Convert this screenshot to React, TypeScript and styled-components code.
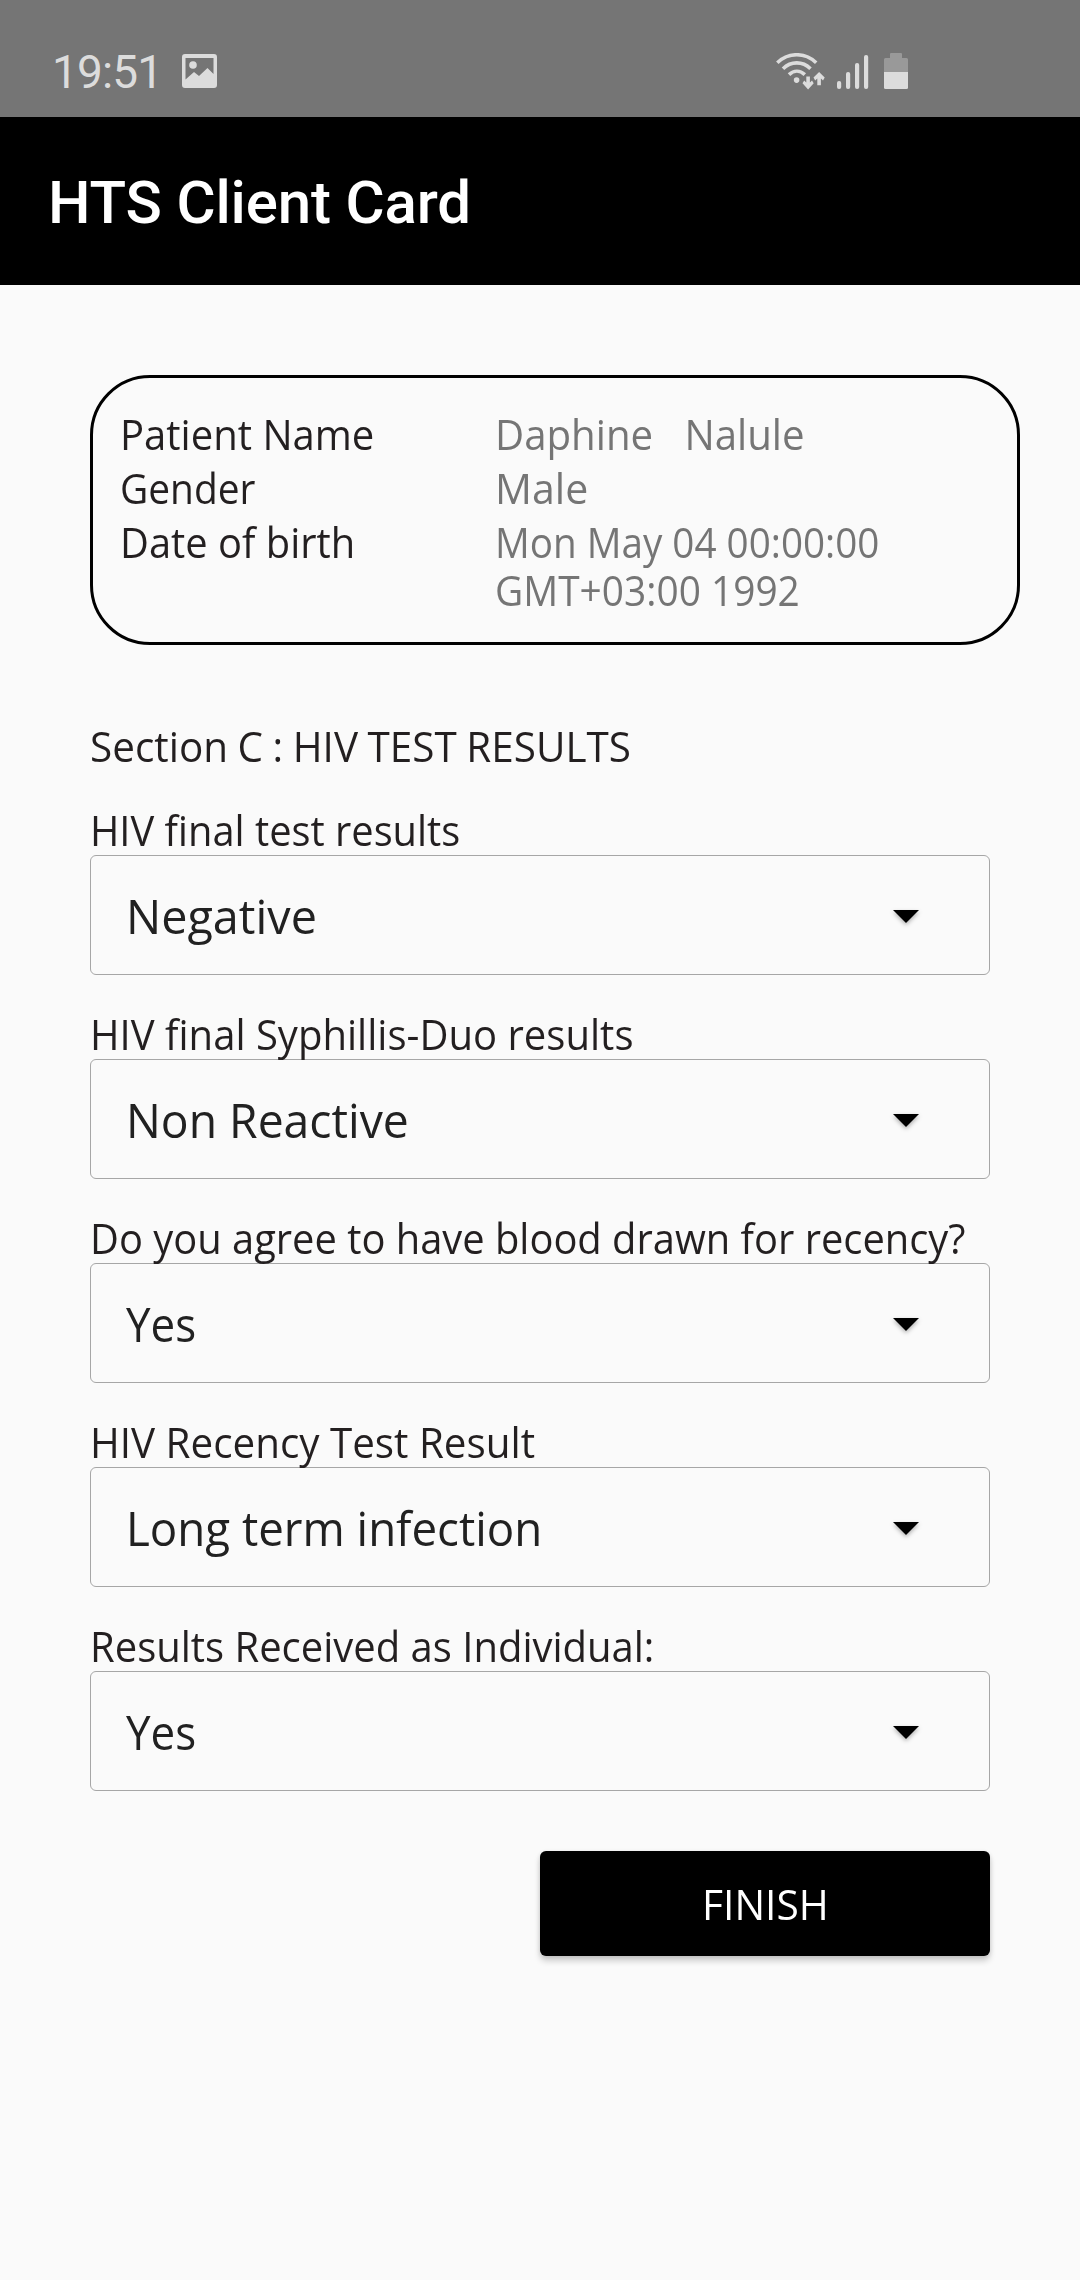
import React from 'react';
import styled, { createGlobalStyle } from 'styled-components';

const GlobalStyle = createGlobalStyle`
  * { box-sizing: border-box; }
  body {
    margin: 0;
    background: #fafafa;
    font-family: "Open Sans", "Noto Sans", sans-serif;
    color: #231f20;
  }
`;

const Screen = styled.div`
  display: flex;
  flex-direction: column;
  width: 1080px;
  min-height: 2280px;
  background: #fafafa;
`;

const StatusBar = styled.header`
  display: flex;
  justify-content: space-between;
  align-items: flex-start;
  height: 117px;
  padding: 45px 172px 0 52px;
  background: #757575;
  color: #dcdcdc;
`;

const StatusGroup = styled.div`
  display: flex;
  align-items: flex-start;
`;

const Clock = styled.span`
  width: 130px;
  font: 400 46px/54px Roboto, sans-serif;
  letter-spacing: -0.87px;
`;

const StatusIcon = styled.svg<{ $left?: number; $top: number }>`
  display: block;
  flex: none;
  margin: ${(p) => p.$top}px 0 0 ${(p) => p.$left ?? 0}px;
  fill: currentColor;
`;

const AppBar = styled.div`
  display: flex;
  align-items: center;
  height: 168px;
  padding: 4px 48px 0;
  background: #000;
`;

const Title = styled.h1`
  margin: 0;
  color: #fff;
  font: 500 60px/70px Roboto, sans-serif;
  letter-spacing: -0.16px;
`;

/* Slightly condensed run of text; $fit is its horizontal ratio. */
const Text = styled.span<{ $fit: number; $center?: boolean }>`
  display: block;
  white-space: pre;
  transform: scaleX(${(p) => p.$fit});
  transform-origin: ${(p) => (p.$center ? 'center' : 'left')} center;
`;

const Content = styled.main`
  display: flex;
  flex-direction: column;
  padding: 90px 60px 0 90px;
  font-size: 42px;
  line-height: 48px;
`;

const PatientCard = styled.section`
  display: flex;
  flex-direction: column;
  gap: 6px;
  height: 270px;
  padding: 32px 27px 0;
  border: 3px solid #000;
  border-radius: 60px;
`;

const PatientRow = styled.div`
  display: grid;
  grid-template-columns: 375px 1fr;
`;

const PatientValue = styled.div`
  color: #757575;
`;

const Form = styled.form`
  display: flex;
  flex-direction: column;
  width: 900px;
  margin-top: 77px;
`;

const SectionTitle = styled.h2`
  margin: 0 0 36px;
  font: inherit;
  word-spacing: -1px;
`;

const Fields = styled.div`
  display: flex;
  flex-direction: column;
  gap: 35px;
`;

const Field = styled.div`
  display: flex;
  flex-direction: column;
  gap: 1px;
`;

const SelectBox = styled.div`
  display: flex;
  align-items: center;
  justify-content: space-between;
  height: 120px;
  padding: 2px 70px 0 35px;
  border: 1px solid #a6a6a6;
  border-radius: 6px;
  color: #212121;
  font-size: 48px;
`;

const Caret = styled.svg`
  display: block;
  filter: drop-shadow(0 2px 2px rgba(0, 0, 0, 0.3));
`;

const FinishButton = styled.button`
  display: flex;
  align-items: center;
  justify-content: center;
  align-self: flex-end;
  width: 450px;
  height: 105px;
  margin-top: 60px;
  padding: 0;
  border: 0;
  border-radius: 6px;
  background: #000;
  color: #fff;
  font: inherit;
  box-shadow: 0 5px 6px rgba(0, 0, 0, 0.18), 0 1px 4px rgba(0, 0, 0, 0.1);
`;

type Line = [text: string, fit: number];

const patient: { label: Line; value: Line[] }[] = [
  { label: ['Patient Name', 0.953], value: [['Daphine   Nalule', 0.957]] },
  { label: ['Gender', 0.926], value: [['Male', 0.979]] },
  {
    label: ['Date of birth', 0.949],
    value: [
      ['Mon May 04 00:00:00', 0.92],
      ['GMT+03:00 1992', 0.925],
    ],
  },
];

const fields: { label: Line; value: Line }[] = [
  { label: ['HIV final test results', 0.948], value: ['Negative', 0.974] },
  { label: ['HIV final Syphillis-Duo results', 0.9535], value: ['Non Reactive', 0.964] },
  { label: ['Do you agree to have blood drawn for recency?', 0.949], value: ['Yes', 0.914] },
  { label: ['HIV Recency Test Result', 0.961], value: ['Long term infection', 0.951] },
  { label: ['Results Received as Individual:', 0.952], value: ['Yes', 0.914] },
];

function ImageIcon() {
  return (
    <StatusIcon $top={9} width="35" height="34" viewBox="0 0 35 34">
      <path
        fillRule="evenodd"
        d="M3 0H32Q35 0 35 3V31Q35 34 32 34H3Q0 34 0 31V3Q0 0 3 0ZM3.5 4V25.5L12 18L17 22L25.5 14L31.5 20V4Z"
      />
      <circle cx="11" cy="11" r="3.8" />
    </StatusIcon>
  );
}

function WifiIcon() {
  return (
    <StatusIcon $top={8} width="49" height="37" viewBox="0 0 49 37">
      <g fill="none" stroke="currentColor" strokeWidth="3.6">
        <path d="M1.3 9.7C12.5 -.9 29 -.9 40.2 9.7" />
        <path d="M7 15.7C15 7.9 26.5 7.9 34.5 15.7" />
        <path d="M13 21.6C17.8 17.1 24 17.1 28.8 21.6" />
      </g>
      <circle cx="20.6" cy="27.1" r="2.8" />
      <path d="M30.3 23.5H33.9V29.4L36 27.4L37.7 30.3L32.1 36.5L26.5 30.3L28.2 27.4L30.3 29.4Z" />
      <path d="M41.3 32.3H44.9V25.4L47 27.4L48.7 24.5L43.1 19L37.5 24.5L39.2 27.4L41.3 25.4Z" />
    </StatusIcon>
  );
}

function SignalIcon() {
  return (
    <StatusIcon $left={12} $top={10} width="32" height="34" viewBox="0 0 32 34">
      <rect x="0" y="26" width="4.2" height="8" rx="2" />
      <rect x="9" y="17" width="4.2" height="17" rx="2" />
      <rect x="18" y="8" width="4.2" height="26" rx="2" />
      <rect x="27" y="0" width="4.2" height="34" rx="2" />
    </StatusIcon>
  );
}

function BatteryIcon() {
  return (
    <StatusIcon $left={15} $top={8} width="24" height="36" viewBox="0 0 24 36">
      <path fill="#999" d="M7 0H17Q18 0 18 1V5H22.5Q24 5 24 6.5V19H0V6.5Q0 5 1.5 5H6V1Q6 0 7 0Z" />
      <path d="M0 19H24V34.5Q24 36 22.5 36H1.5Q0 36 0 34.5Z" />
    </StatusIcon>
  );
}

export default function App() {
  return (
    <Screen>
      <GlobalStyle />
      <StatusBar>
        <StatusGroup>
          <Clock>19:51</Clock>
          <ImageIcon />
        </StatusGroup>
        <StatusGroup>
          <WifiIcon />
          <SignalIcon />
          <BatteryIcon />
        </StatusGroup>
      </StatusBar>
      <AppBar>
        <Title>HTS Client Card</Title>
      </AppBar>
      <Content>
        <PatientCard>
          {patient.map(({ label, value }) => (
            <PatientRow key={label[0]}>
              <Text $fit={label[1]}>{label[0]}</Text>
              <PatientValue>
                {value.map(([text, fit]) => (
                  <Text key={text} $fit={fit}>{text}</Text>
                ))}
              </PatientValue>
            </PatientRow>
          ))}
        </PatientCard>
        <Form>
          <SectionTitle>
            <Text $fit={0.963}>Section C : HIV TEST RESULTS</Text>
          </SectionTitle>
          <Fields>
            {fields.map(({ label, value }) => (
              <Field key={label[0]}>
                <Text $fit={label[1]}>{label[0]}</Text>
                <SelectBox>
                  <Text $fit={value[1]}>{value[0]}</Text>
                  <Caret width="26" height="13" viewBox="0 0 26 13">
                    <path d="M0 0H26L13 13Z" />
                  </Caret>
                </SelectBox>
              </Field>
            ))}
          </Fields>
          <FinishButton type="button">
            <Text $fit={0.969} $center>FINISH</Text>
          </FinishButton>
        </Form>
      </Content>
    </Screen>
  );
}
